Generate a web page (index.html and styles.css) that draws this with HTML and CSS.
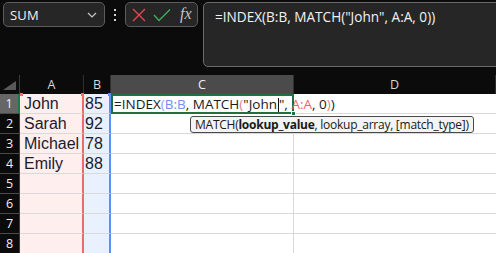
FILE: index.html
```html
<!DOCTYPE html>
<html>
<head>
<meta charset="utf-8">
<link rel="stylesheet" href="styles.css">
</head>
<body>
<div class="app">
  <div class="toolbar">
    <div class="namebox">
      <span class="name">SUM</span>
      <svg class="chev" width="10" height="6" viewBox="0 0 10 6"><polyline points="1,1 5,5 9,1" fill="none" stroke="#c8c8c8" stroke-width="1.2"/></svg>
    </div>
    <div class="dots"><i></i><i></i><i></i></div>
    <div class="btns">
      <svg width="16" height="16" viewBox="0 0 16 16"><path d="M2 2 L14 14 M14 2 L2 14" stroke="#e5464f" stroke-width="1.4" fill="none"/></svg>
      <svg width="18" height="16" viewBox="0 0 18 16"><polyline points="1,8 6,13.5 17,2.5" stroke="#3fae5e" stroke-width="1.4" fill="none"/></svg>
      <span class="fx">fx</span>
    </div>
    <div class="fbar">=INDEX(B:B, MATCH("John", A:A, 0))</div>
  </div>
  <div class="sheet">
    <div class="corner"><svg width="13" height="9" viewBox="0 0 13 9"><polygon points="0,9 13,9 13,0" fill="#595959"/></svg></div>
    <div class="ch">A</div>
    <div class="ch">B</div>
    <div class="ch ch-active">C</div>
    <div class="ch">D</div>

    <div class="rh rh-active">1</div>
    <div class="c ca first"><span class="hl hl-red"></span><span class="hr hr-red"></span>John</div>
    <div class="c cb first"><span class="hr hr-blue"></span>85</div>
    <div class="c cc edit"><span class="f">=INDEX<span class="pb">(</span><span class="rb">B:B</span>, MATCH<span class="pr">(</span>"John<span class="caret"></span>", <span class="rr">A:A</span>, 0<span class="pr">)</span>)</span><span class="handle"></span></div>
    <div class="c cd"></div>

    <div class="rh">2</div>
    <div class="c ca">Sarah</div>
    <div class="c cb">92</div>
    <div class="c cc"><div class="tip">MATCH(<b>lookup_value</b>, lookup_array, [match_type])</div></div>
    <div class="c cd"></div>

    <div class="rh">3</div>
    <div class="c ca">Michael</div>
    <div class="c cb">78</div>
    <div class="c cc"></div>
    <div class="c cd"></div>

    <div class="rh">4</div>
    <div class="c ca">Emily</div>
    <div class="c cb">88</div>
    <div class="c cc"></div>
    <div class="c cd"></div>

    <div class="rh">5</div>
    <div class="c ca"></div>
    <div class="c cb"></div>
    <div class="c cc"></div>
    <div class="c cd"></div>

    <div class="rh">6</div>
    <div class="c ca"></div>
    <div class="c cb"></div>
    <div class="c cc"></div>
    <div class="c cd"></div>

    <div class="rh">7</div>
    <div class="c ca"></div>
    <div class="c cb"></div>
    <div class="c cc"></div>
    <div class="c cd"></div>

    <div class="rh">8</div>
    <div class="c ca"></div>
    <div class="c cb"></div>
    <div class="c cc"></div>
    <div class="c cd"></div>
  </div>
</div>
</body>
</html>
```

FILE: styles.css
```css
* { box-sizing: border-box; }
html, body { margin: 0; padding: 0; }
body {
  width: 496px;
  height: 253px;
  overflow: hidden;
  background: #0b0b0b;
  font-family: "Open Sans", "Noto Sans", sans-serif;
}
.app { width: 496px; }
.toolbar {
  display: flex;
  align-items: flex-start;
  height: 75px;
  padding: 2px 0 0 3px;
}
.namebox {
  width: 102px;
  height: 25px;
  border: 1px solid #5c5c5c;
  border-radius: 5px;
  background: #262626;
  display: flex;
  align-items: center;
  justify-content: space-between;
  padding: 0 7px 0 6px;
}
.name { color: #f2f2f2; font-size: 13px; letter-spacing: 0.2px; }
.chev { margin-top: 1px; }
.dots {
  width: 20px;
  height: 25px;
  display: flex;
  flex-direction: column;
  align-items: center;
  justify-content: center;
  gap: 3px;
}
.dots i { display: block; width: 2px; height: 2px; background: #d0d0d0; }
.btns {
  width: 73px;
  height: 25px;
  border: 1px solid #5c5c5c;
  border-radius: 5px;
  background: #262626;
  display: flex;
  align-items: center;
  gap: 6px;
  padding: 0 0 0 5px;
}
.fx {
  font-family: "Liberation Serif", serif;
  font-style: italic;
  font-size: 16px;
  color: #c4c4c4;
  margin-left: 3px;
  margin-top: -2px;
}
.fbar {
  flex: 1;
  margin-left: 5px;
  margin-right: -8px;
  height: 65px;
  border: 1px solid #6a6a6a;
  border-radius: 5px;
  background: #262626;
  color: #f2f2f2;
  font-size: 13.6px;
  padding: 4px 0 0 11px;
  white-space: nowrap;
}
.sheet {
  display: grid;
  grid-template-columns: 20px 64px 27px 183px 202px;
  grid-template-rows: 19px repeat(8, 20px);
}
.corner {
  background: #0b0b0b;
  border-right: 1px solid #3a3a3a;
  display: flex;
  align-items: flex-end;
  justify-content: flex-end;
  padding: 0 3px 4px 0;
}
.ch {
  background: #0b0b0b;
  color: #d8d8d8;
  font-size: 12.5px;
  display: flex;
  align-items: center;
  justify-content: center;
  border-right: 1px solid #2e2e2e;
}
.ch-active { background: #4b4b4b; color: #f0f0f0; }
.rh {
  background: #0b0b0b;
  color: #f0f0f0;
  font-size: 12.5px;
  display: flex;
  align-items: center;
  justify-content: center;
  border-bottom: 1px solid #4a4a4a;
  border-right: 1px solid #3a3a3a;
}
.rh-active { background: #666666; border-right: 2px solid #1f7a45; }
.c {
  position: relative;
  border-bottom: 1px solid #d9d9d9;
  background: #ffffff;
  font-family: "Liberation Sans", Arial, sans-serif;
  font-size: 16px;
  color: #1b1b2e;
  display: flex;
  align-items: center;
  white-space: nowrap;
}
.ca { background: #ffeeee; border-right: 2px solid #f06a6a; padding-left: 4px; }
.cb { background: #e9f1fe; border-right: 2px solid #5b8ff0; padding-left: 1px; }
.cc { border-right: 1px solid #d9d9d9; }
.cd { }
.edit {
  border: 2px solid #1f6f3f;
  padding-left: 1px;
  overflow: visible;
  z-index: 2;
}
.f {
  font-family: "Open Sans", "Noto Sans", sans-serif;
  font-size: 13.5px;
  color: #1a1a1a;
}
.pb { color: #8ba3f0; }
.rb { color: #6f8ff2; }
.pr { color: #f27a8a; }
.rr { color: #ef5f6a; }
.caret {
  display: inline-block;
  width: 1px;
  height: 14px;
  margin-left: 1px;
  background: #111;
  vertical-align: -3px;
}
.handle {
  position: absolute;
  right: -4px;
  bottom: -4px;
  width: 5px;
  height: 5px;
  background: #1f6f3f;
  border: 1px solid #fff;
}
.hl, .hr {
  position: absolute;
  top: -1px;
  width: 3px;
  height: 3px;
}
.hl { left: 0; }
.hr { right: -2px; }
.hl-red, .hr-red { background: #f06a6a; }
.hr-blue { background: #5b8ff0; }
.tip {
  position: absolute;
  left: 79px;
  top: 2px;
  height: 17px;
  padding: 0 4px;
  background: #f4f4f4;
  border: 1px solid #4a4a4a;
  border-radius: 3px;
  font-family: "Open Sans", "Noto Sans", sans-serif;
  font-size: 12px;
  letter-spacing: -0.25px;
  line-height: 15px;
  color: #1a1a1a;
  white-space: nowrap;
  z-index: 3;
}
.tip b { font-weight: 700; }
```
